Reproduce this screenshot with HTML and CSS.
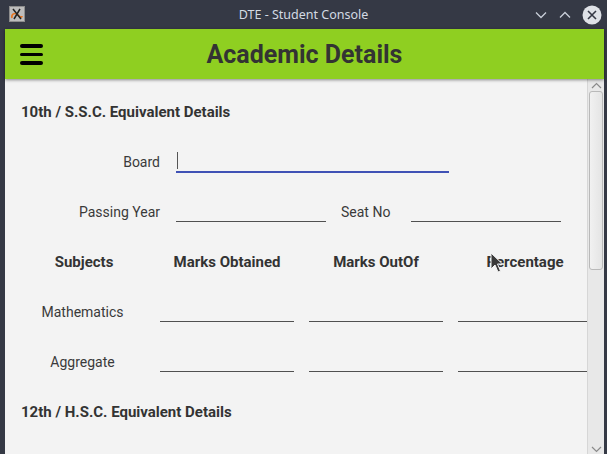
FILE: index.html
```html
<!DOCTYPE html>
<html>
<head>
<meta charset="utf-8">
<link rel="stylesheet" href="styles.css">
</head>
<body>
<div class="window">
  <div class="titlebar">
    <div class="tb-icon">
      <svg width="16" height="16" viewBox="0 0 16 16">
        <rect x="0.5" y="0.5" width="15" height="15" fill="#bdbdbd" stroke="#8d8d8d"/>
        <path d="M3 12 C2 8 6 6 9 9 C11 11 13 12 13 10" fill="none" stroke="#e8731d" stroke-width="1.6"/>
        <path d="M4 3 L12 13 M11 3 L5 13" stroke="#222" stroke-width="1.5"/>
      </svg>
    </div>
    <div class="tb-title">DTE - Student Console</div>
    <div class="tb-controls">
      <svg class="tb-btn" width="12" height="8" viewBox="0 0 12 8"><path d="M1 1.5 L6 6.5 L11 1.5" fill="none" stroke="#c8ced8" stroke-width="1.3"/></svg>
      <svg class="tb-btn" width="12" height="8" viewBox="0 0 12 8"><path d="M1 6.5 L6 1.5 L11 6.5" fill="none" stroke="#c8ced8" stroke-width="1.3"/></svg>
      <svg class="tb-close" width="20" height="20" viewBox="0 0 20 20"><circle cx="10" cy="10" r="9.5" fill="#dfe2e7"/><path d="M6 6 L14 14 M14 6 L6 14" stroke="#353945" stroke-width="1.6"/></svg>
    </div>
  </div>
  <div class="app">
    <header class="appbar">
      <div class="menu">
        <span class="bar"></span><span class="bar"></span><span class="bar"></span>
      </div>
      <h1 class="appbar-title">Academic Details</h1>
      <div class="spacer"></div>
    </header>
    <div class="body">
      <main class="content">
        <div class="section-title">10th / S.S.C. Equivalent Details</div>
        <div class="row">
          <span class="label">Board</span>
          <div class="field field-board focused"><span class="caret"></span></div>
        </div>
        <div class="row">
          <span class="label">Passing Year</span>
          <div class="field field-half"></div>
          <span class="label-inline">Seat No</span>
          <div class="field field-half field-seat"></div>
        </div>
        <div class="grid-row">
          <span class="head first">Subjects</span>
          <span class="head">Marks Obtained</span>
          <span class="head">Marks OutOf</span>
          <span class="head">Percentage</span>
        </div>
        <div class="grid-row">
          <span class="cell-label">Mathematics</span>
          <div class="field cell"></div>
          <div class="field cell"></div>
          <div class="field cell"></div>
        </div>
        <div class="grid-row">
          <span class="cell-label">Aggregate</span>
          <div class="field cell"></div>
          <div class="field cell"></div>
          <div class="field cell"></div>
        </div>
        <div class="section-title">12th / H.S.C. Equivalent Details</div>
      </main>
      <div class="scrollbar">
        <svg class="sb-arrow" width="11" height="7" viewBox="0 0 11 7"><path d="M1 6 L5.5 1.5 L10 6" fill="none" stroke="#8a8a8a" stroke-width="1.2"/></svg>
        <div class="sb-track">
          <div class="sb-thumb"></div>
        </div>
        <svg class="sb-arrow" width="11" height="7" viewBox="0 0 11 7"><path d="M1 1 L5.5 5.5 L10 1" fill="none" stroke="#8a8a8a" stroke-width="1.2"/></svg>
      </div>
    </div>
  </div>
  <svg class="cursor" width="14" height="22" viewBox="0 0 14 22">
    <path d="M1 1 L1 17 L5 13 L8 20 L10.5 19 L7.5 12 L12.5 12 Z" fill="#3a3a3a" stroke="#f3f3f3" stroke-width="1"/>
  </svg>
</div>
</body>
</html>
```

FILE: styles.css
```css
* { box-sizing: border-box; }
html, body { margin: 0; padding: 0; }
body {
  width: 607px;
  height: 454px;
  overflow: hidden;
  font-family: Roboto, "Liberation Sans", sans-serif;
}
.window {
  position: relative;
  width: 607px;
  height: 454px;
  background: #353945;
  display: flex;
  flex-direction: column;
}
.titlebar {
  height: 29px;
  flex: none;
  display: flex;
  align-items: center;
  position: relative;
  padding: 0 5px 0 9px;
}
.tb-icon { width: 16px; height: 16px; display: flex; margin-top: -1px; }
.tb-title {
  position: absolute;
  left: 0; right: 0;
  text-align: center;
  font-family: "Noto Sans", "Open Sans", sans-serif;
  font-size: 12.5px;
  color: #d3dae3;
  line-height: 29px;
  pointer-events: none;
}
.tb-controls {
  margin-left: auto;
  display: flex;
  align-items: center;
  gap: 12px;
}
.tb-btn { display: block; }
.tb-close { display: block; margin-left: -1px; }
.app {
  flex: 1;
  margin: 0 3px 0 5px;
  background: #f3f3f3;
  display: flex;
  flex-direction: column;
  min-height: 0;
}
.appbar {
  height: 50px;
  flex: none;
  background: #8fcf21;
  display: flex;
  align-items: center;
  padding: 0 15px;
  position: relative;
  z-index: 1;
  box-shadow: 0 1px 3px rgba(0,0,0,0.45);
}
.menu {
  width: 23px;
  display: flex;
  flex-direction: column;
  gap: 5px;
  margin-top: 1px;
}
.bar {
  display: block;
  height: 3.5px;
  background: #000;
  border-radius: 2px;
}
.appbar-title {
  flex: 1;
  margin: 0;
  text-align: center;
  font-size: 25px;
  font-weight: 700;
  color: #333333;
}
.spacer { width: 23px; }
.body {
  flex: 1;
  display: flex;
  min-height: 0;
}
.content {
  flex: 1;
  overflow: hidden;
  padding-top: 8px;
  color: #3a3a3a;
}
.section-title {
  height: 50px;
  line-height: 50px;
  padding-left: 16px;
  font-size: 15px;
  font-weight: 700;
  color: #333;
}
.row {
  height: 50px;
  display: flex;
  align-items: center;
}
.label {
  width: 155px;
  text-align: right;
  font-size: 14px;
}
.field {
  height: 20px;
  border-bottom: 1px solid #505050;
  position: relative;
  flex: none;
}
.field-board { width: 273px; margin-left: 16px; }
.field.focused { border-bottom: 2px solid #3f51b5; height: 21px; }
.caret {
  position: absolute;
  left: 1px;
  top: 0;
  width: 1px;
  height: 17px;
  background: #555;
}
.field-half { width: 150px; margin-left: 16px; }
.label-inline { margin-left: 15px; width: 70px; font-size: 14px; }
.field-seat { margin-left: 0; }
.grid-row {
  height: 50px;
  display: grid;
  grid-template-columns: 155px 149px 149px 149px;
  align-items: center;
}
.head {
  font-size: 15px;
  font-weight: 700;
  color: #333;
  text-align: center;
  margin-right: 15px;
  white-space: nowrap;
}
.head.first { margin-right: 0; margin-left: 3px; }
.cell-label {
  font-size: 14px;
  text-align: center;
}
.field.cell { width: 134px; }
.scrollbar {
  width: 17px;
  flex: none;
  background: #e8e8e8;
  border-left: 1px solid #d6d6d6;
  display: flex;
  flex-direction: column;
  align-items: center;
  padding: 3px 0 1px;
}
.sb-arrow { display: block; flex: none; }
.sb-track {
  flex: 1;
  width: 100%;
  padding: 2px 1px 0 1px;
}
.sb-thumb {
  height: 179px;
  border: 1px solid #b9b9b9;
  border-radius: 3px;
  background: linear-gradient(to right, #f1f1f1, #e4e4e4);
}
.cursor {
  position: absolute;
  left: 490px;
  top: 252px;
}
```
